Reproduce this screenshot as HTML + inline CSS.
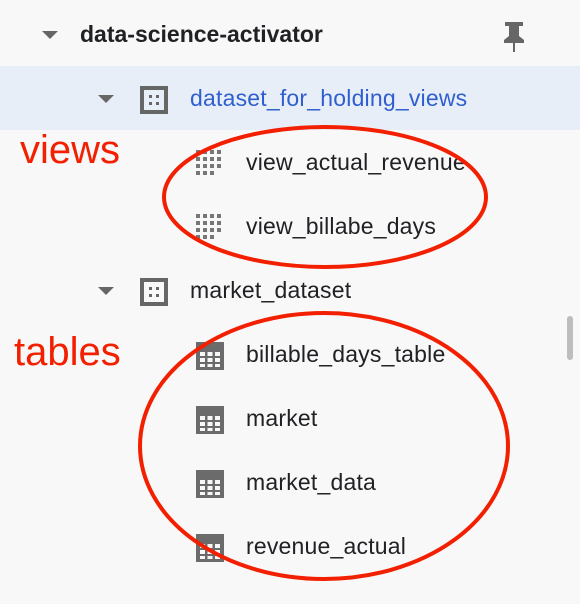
<!DOCTYPE html><html><head><style>
body{margin:0;width:580px;height:604px;background:#f8f8f8;position:relative;overflow:hidden;font-family:"Liberation Sans",Arial,sans-serif;color:#202124}
.r{position:absolute;font-size:23px;line-height:28px;letter-spacing:0.2px}
.t{position:absolute;width:0;height:0;border-left:8px solid transparent;border-right:8px solid transparent;border-top:8px solid #666}
svg{position:absolute}
</style></head><body>
<div style="position:absolute;left:0;top:66px;width:580px;height:64px;background:#e8eef8"></div>
<div class="t" style="left:42px;top:31px"></div>
<div class="r" style="left:80px;top:20px;font-weight:bold;letter-spacing:0">data-science-activator</div>
<svg style="left:500px;top:20px" width="28" height="34" viewBox="0 0 28 34"><path d="M5 2h18v4h-4v10l5 4v3H15v9h-2v-9H4v-3l5-4V6H5z" fill="#666"/></svg>
<div class="t" style="left:98px;top:95px"></div>
<svg style="left:140px;top:86px" width="28" height="28"><rect x="2" y="2" width="24" height="24" fill="none" stroke="#666" stroke-width="4"/><rect x="9" y="9" width="3" height="3" fill="#666"/><rect x="16" y="9" width="3" height="3" fill="#666"/><rect x="9" y="16" width="3" height="3" fill="#666"/><rect x="16" y="16" width="3" height="3" fill="#666"/></svg>
<div class="r" style="left:190px;top:84px;color:#2f5fcf">dataset_for_holding_views</div>
<div class="r" style="left:20px;top:128px;font-size:40px;line-height:44px;letter-spacing:0;color:#f22000">views</div>
<svg style="left:196px;top:150px" width="28" height="28"><g fill="#777"><rect x="0" y="0" width="4" height="4"/><rect x="7" y="0" width="4" height="4"/><rect x="14" y="0" width="4" height="4"/><rect x="21" y="0" width="4" height="4"/><rect x="0" y="7" width="4" height="4"/><rect x="7" y="7" width="4" height="4"/><rect x="14" y="7" width="4" height="4"/><rect x="21" y="7" width="4" height="4"/><rect x="0" y="14" width="4" height="4"/><rect x="7" y="14" width="4" height="4"/><rect x="14" y="14" width="4" height="4"/><rect x="21" y="14" width="4" height="4"/><rect x="0" y="21" width="4" height="4"/><rect x="7" y="21" width="4" height="4"/><rect x="14" y="21" width="4" height="4"/></g></svg>
<div class="r" style="left:246px;top:148px">view_actual_revenue</div>
<svg style="left:196px;top:214px" width="28" height="28"><g fill="#777"><rect x="0" y="0" width="4" height="4"/><rect x="7" y="0" width="4" height="4"/><rect x="14" y="0" width="4" height="4"/><rect x="21" y="0" width="4" height="4"/><rect x="0" y="7" width="4" height="4"/><rect x="7" y="7" width="4" height="4"/><rect x="14" y="7" width="4" height="4"/><rect x="21" y="7" width="4" height="4"/><rect x="0" y="14" width="4" height="4"/><rect x="7" y="14" width="4" height="4"/><rect x="14" y="14" width="4" height="4"/><rect x="21" y="14" width="4" height="4"/><rect x="0" y="21" width="4" height="4"/><rect x="7" y="21" width="4" height="4"/><rect x="14" y="21" width="4" height="4"/></g></svg>
<div class="r" style="left:246px;top:212px">view_billabe_days</div>
<div class="t" style="left:98px;top:287px"></div>
<svg style="left:140px;top:278px" width="28" height="28"><rect x="2" y="2" width="24" height="24" fill="none" stroke="#666" stroke-width="4"/><rect x="9" y="9" width="3" height="3" fill="#666"/><rect x="16" y="9" width="3" height="3" fill="#666"/><rect x="9" y="16" width="3" height="3" fill="#666"/><rect x="16" y="16" width="3" height="3" fill="#666"/></svg>
<div class="r" style="left:190px;top:276px">market_dataset</div>
<div class="r" style="left:14px;top:330px;font-size:40px;line-height:44px;letter-spacing:0;color:#f22000">tables</div>
<div class="r" style="left:246px;top:340px">billable_days_table</div>
<div class="r" style="left:246px;top:404px">market</div>
<div class="r" style="left:246px;top:468px">market_data</div>
<div class="r" style="left:246px;top:532px">revenue_actual</div>
<svg style="left:0;top:0" width="580" height="604">
<defs><g id="tb"><rect x="0" y="0" width="28" height="28" fill="#6b6b6b"/><g fill="#f8f8f8"><rect x="4" y="10" width="5" height="4"/><rect x="11.5" y="10" width="5" height="4"/><rect x="19" y="10" width="5" height="4"/><rect x="4" y="16" width="5" height="4"/><rect x="11.5" y="16" width="5" height="4"/><rect x="19" y="16" width="5" height="4"/><rect x="4" y="22" width="5" height="3"/><rect x="11.5" y="22" width="5" height="3"/><rect x="19" y="22" width="5" height="3"/></g></g></defs>
<use href="#tb" x="196" y="342"/><use href="#tb" x="196" y="406"/><use href="#tb" x="196" y="470"/><use href="#tb" x="196" y="534"/>
<ellipse cx="325" cy="197" rx="161" ry="70" fill="none" stroke="#f22000" stroke-width="4"/>
<ellipse cx="324" cy="446" rx="184" ry="133" fill="none" stroke="#f22000" stroke-width="4"/>
<rect x="567" y="316" width="6" height="44" rx="3" fill="#bdbdbd"/>
</svg>
</body></html>
